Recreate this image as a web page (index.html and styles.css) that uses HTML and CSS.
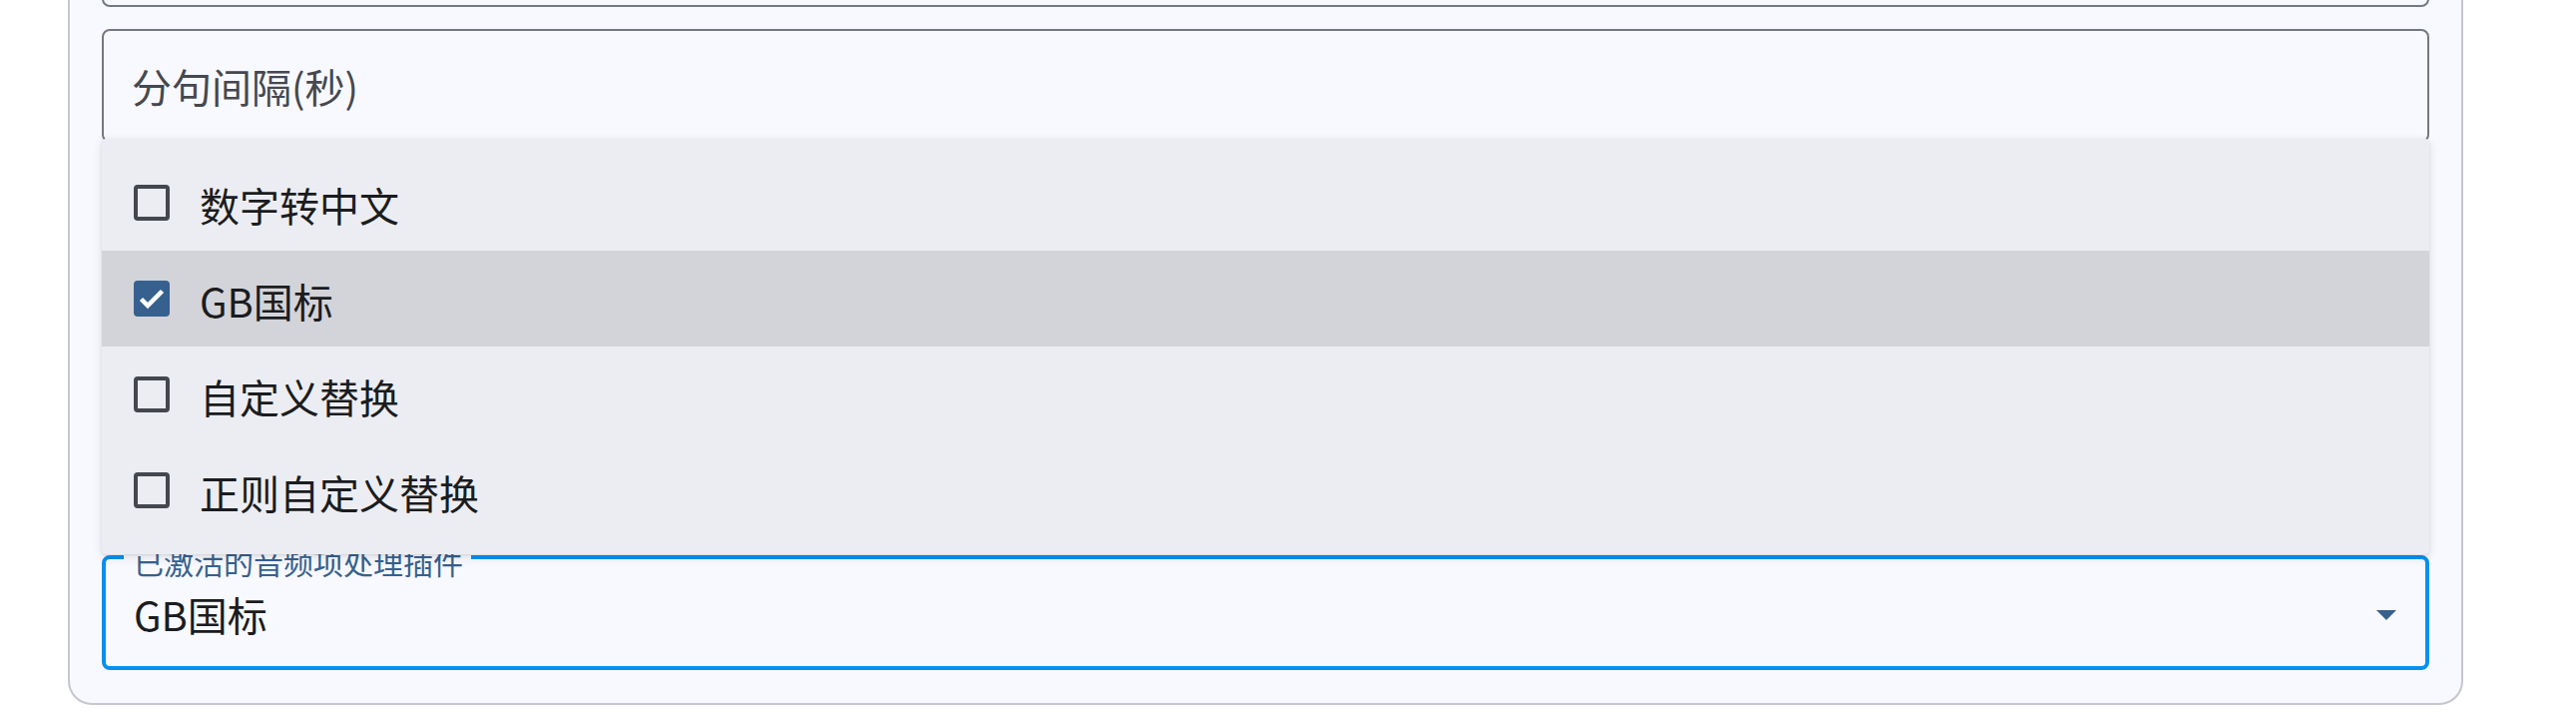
FILE: index.html
```html
<!DOCTYPE html>
<html lang="zh-CN">
<head>
<meta charset="utf-8">
<title>音频项处理插件</title>
<link rel="stylesheet" href="styles.css">
</head>
<body>
<div class="card">
  <div class="field field-outlined"></div>
  <div class="field field-outlined">
    <span class="field-label">分句间隔(秒)</span>
  </div>
  <div class="under-menu"></div>
  <div class="field field-focused">
    <span class="floating-label">已激活的音频项处理插件</span>
    <span class="field-value">GB国标</span>
    <svg class="dropdown-arrow" width="20" height="10" viewBox="0 0 20 10"><path d="M0 0 L20 0 L10 10 Z" fill="#36618e"/></svg>
    <div class="menu">
      <div class="menu-item">
        <span class="checkbox"></span>
        <span class="menu-text">数字转中文</span>
      </div>
      <div class="menu-item menu-item-selected">
        <span class="checkbox checkbox-checked">
          <svg width="36" height="36" viewBox="0 0 36 36"><path d="M7.5 18.5 L14 25 L28.5 10.5" fill="none" stroke="#ffffff" stroke-width="4.5"/></svg>
        </span>
        <span class="menu-text">GB国标</span>
      </div>
      <div class="menu-item">
        <span class="checkbox"></span>
        <span class="menu-text">自定义替换</span>
      </div>
      <div class="menu-item">
        <span class="checkbox"></span>
        <span class="menu-text">正则自定义替换</span>
      </div>
    </div>
  </div>
</div>
</body>
</html>
```

FILE: styles.css
```css
html, body {
  margin: 0;
  padding: 0;
  background: #ffffff;
  height: 715px;
  overflow: hidden;
  font-family: Roboto, "Noto Sans CJK SC", "Noto Sans", sans-serif;
}

.card {
  box-sizing: border-box;
  width: 2400px;
  margin: -141px 0 0 68px;
  padding: 32px 32px 33px 32px;
  background: #f8f9fe;
  border: 2px solid #c5c6ce;
  border-radius: 24px;
  display: flex;
  flex-direction: column;
  gap: 22px;
}

.field {
  position: relative;
  box-sizing: border-box;
  height: 114px;
  border-radius: 8px;
  display: flex;
  align-items: center;
}

.field-outlined {
  border: 2px solid #747880;
  padding-left: 28px;
}

.field-label {
  font-family: "Noto Sans CJK SC", sans-serif;
  font-size: 40px;
  line-height: 1;
  color: #45484f;
}

.under-menu {
  height: 369px;
}

.field-focused {
  border: 4px solid #0890ee;
  padding: 3px 0 0 28px;
  height: 115px;
}

.floating-label {
  position: absolute;
  top: -13px;
  left: 18px;
  padding: 0 8px 0 10px;
  background: #f8f9fe;
  font-family: "Noto Sans CJK SC", sans-serif;
  font-size: 30px;
  line-height: 30px;
  color: #36618e;
}

.field-value {
  font-family: "Noto Sans CJK SC", sans-serif;
  font-size: 40px;
  line-height: 1;
  color: #1b1c20;
  flex: 1;
}

.dropdown-arrow {
  margin-right: 29px;
  margin-top: 1px;
}

.menu {
  position: absolute;
  left: -4px;
  right: -4px;
  bottom: 112px;
  box-sizing: border-box;
  padding: 16px 0;
  background: #ecedf2;
  border-radius: 4px;
  box-shadow: 0 1px 3px rgba(0, 0, 0, 0.10), 0 3px 10px 2px rgba(0, 0, 0, 0.07);
  z-index: 5;
}

.menu-item {
  height: 96px;
  display: flex;
  align-items: center;
  padding-left: 32px;
  gap: 30px;
}

.menu-item-selected {
  background: #d3d4d9;
}

.checkbox {
  box-sizing: border-box;
  width: 36px;
  height: 36px;
  border: 4px solid #44474e;
  border-radius: 4px;
  flex: none;
  position: relative;
}

.checkbox-checked {
  border: none;
  background: #36618e;
}

.checkbox-checked svg {
  display: block;
}

.menu-text {
  font-family: "Noto Sans CJK SC", sans-serif;
  font-size: 40px;
  line-height: 1;
  color: #1b1c20;
  padding-top: 4px;
}
```
